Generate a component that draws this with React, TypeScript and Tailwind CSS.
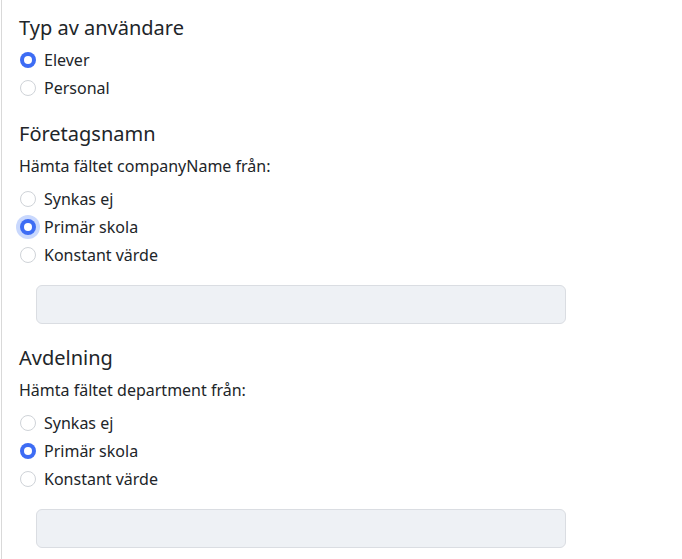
import React from 'react';

type Option = { label: string; checked?: boolean; focused?: boolean };

function Radio({ label, checked, focused }: Option) {
  return (
    <label className="flex h-7 items-center">
      <span
        className={`ml-px flex h-4 w-4 shrink-0 items-center justify-center rounded-full ${
          checked ? 'bg-[#3d6cf4]' : 'border border-[#cfd3d8] bg-white'
        } ${focused ? 'ring-4 ring-[#c9d8fd]' : ''}`}
      >
        {checked && <span className="h-2 w-2 rounded-full bg-white" />}
      </span>
      <span className="ml-2 text-base leading-6 text-[#212529]">{label}</span>
    </label>
  );
}

function SyncSection({ title, field, focused }: { title: string; field: string; focused?: boolean }) {
  return (
    <section>
      <h5 className="text-xl leading-6 text-[#212529]">{title}</h5>
      <p className="mt-2 text-base leading-6 text-[#212529]">Hämta fältet {field} från:</p>
      <div className="mt-[7px]">
        <Radio label="Synkas ej" />
        <Radio label="Primär skola" checked focused={focused} />
        <Radio label="Konstant värde" />
      </div>
      <div className="ml-[17px] mt-4 h-[39px] w-[530px] rounded-md border border-[#dadde2] bg-[#eef1f5]" />
    </section>
  );
}

export default function App() {
  return (
    <div
      className="ml-px min-h-[559px] border-l border-[#d9d9d9] bg-white pl-[17px] pt-4"
      style={{ fontFamily: '"Noto Sans", "Open Sans", sans-serif' }}
    >
      <section>
        <h5 className="text-xl leading-6 text-[#212529]">Typ av användare</h5>
        <div className="mt-1.5">
          <Radio label="Elever" checked />
          <Radio label="Personal" />
        </div>
      </section>
      <div className="mt-5">
        <SyncSection title="Företagsnamn" field="companyName" focused />
      </div>
      <div className="mt-[22px]">
        <SyncSection title="Avdelning" field="department" />
      </div>
    </div>
  );
}
